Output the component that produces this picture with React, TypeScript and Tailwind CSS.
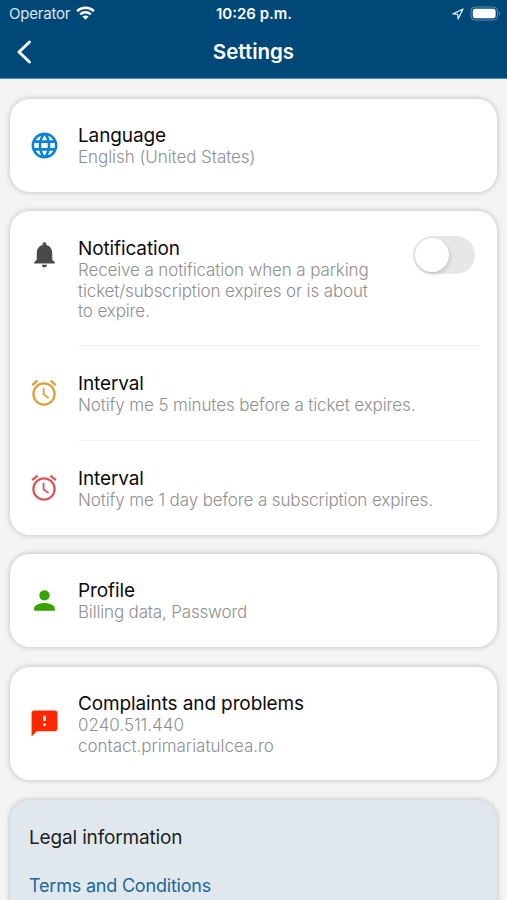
import React, { useState } from 'react';
import { MdFeedback, MdLanguage, MdNotifications, MdPerson } from 'react-icons/md';

interface RowProps {
  icon: React.ReactNode;
  title: string;
  children: React.ReactNode;
  className?: string;
  bodyClass?: string;
  alignTop?: boolean;
}

const Card: React.FC<{ className: string; children: React.ReactNode }> = ({ className, children }) => (
  <section className={`shrink-0 rounded-[20px] shadow-[0_0_5px_1px_rgba(0,0,0,0.18)] ${className}`}>{children}</section>
);

const Row: React.FC<RowProps> = ({ icon, title, children, className = '', bodyClass = 'tracking-[-0.12px]', alignTop }) => (
  <div className={`flex pl-[18px] ${alignTop ? 'items-start' : 'items-center'} ${className}`}>
    <div className={`mr-[18px] flex w-8 shrink-0 justify-center ${alignTop ? 'pt-[3px]' : ''}`}>{icon}</div>
    <div className="whitespace-nowrap pt-0.5">
      <h2 className="text-[19px] leading-[22px] tracking-[-0.12px] text-[#0c0c0c]">{title}</h2>
      <div className={`text-[17px] leading-[20.5px] font-light text-[#8f8f8f] ${bodyClass}`}>{children}</div>
    </div>
  </div>
);

const AlarmIcon: React.FC<{ color: string }> = ({ color }) => (
  <svg width="32" height="32" viewBox="0 0 32 32" fill="none" stroke={color}>
    <circle cx="16" cy="17" r="10.6" strokeWidth="2.3" />
    <path d="M15.6 11v6.6l5 3.4" strokeWidth="1.8" />
    <path d="M4.2 8.2 9.6 3.6M27.8 8.2l-5.4-4.6" strokeWidth="2.4" />
  </svg>
);

const Divider = () => <div className="ml-[68px] mr-[17px] h-px bg-[#f3f3f3]" />;

const StatusBar = () => (
  <div className="grid h-[27px] grid-cols-3 items-center pl-[9px] pr-[6px] text-[15px] leading-none">
    <div className="flex items-center gap-[6px]">
      <span className="tracking-[-0.2px] text-[#dce7ef]">Operator</span>
      <svg className="-mt-0.5" width="19" height="14" viewBox="0 0 19 14" fill="none" stroke="white" strokeWidth="2.4">
        <path d="M1.1 5.1C5.7.6 13.3.6 17.9 5.1" />
        <path d="M4.2 8.3c2.9-2.8 7.7-2.8 10.6 0" />
        <path d="M9.5 13.7 6.4 10.6c1.7-1.6 4.5-1.6 6.2 0Z" fill="white" stroke="none" />
      </svg>
    </div>
    <span className="pr-0.5 text-center font-semibold">10:26 p.m.</span>
    <div className="flex items-center justify-end gap-[6px]">
      <svg width="12" height="12" viewBox="0 0 12 12" fill="none" stroke="#dce7ef" strokeWidth="1.3" strokeLinejoin="round">
        <path d="M11 1 1 5.9l4.7.4.4 4.7L11 1Z" />
      </svg>
      <svg width="31" height="15" viewBox="0 0 31 15">
        <rect x="1" y="1" width="26.5" height="13" rx="4" fill="none" stroke="#5d8bab" strokeWidth="1" />
        <rect x="2.8" y="2.8" width="22.8" height="9.4" rx="2.2" fill="white" />
        <path d="M29 5.5c1.5.7 1.5 3.3 0 4Z" fill="#5d8bab" />
      </svg>
    </div>
  </div>
);

export default function App() {
  const [enabled, setEnabled] = useState(false);

  return (
    <div className="flex h-[900px] w-full flex-col overflow-hidden bg-[#f4f4f4] font-['Inter',sans-serif]">
      <header className="h-[79px] shrink-0 border-b border-[#4a8fb8] bg-[#004877] text-white">
        <StatusBar />
        <div className="grid h-[50px] grid-cols-3 items-center px-4">
          <button aria-label="Back">
            <svg width="18" height="26" viewBox="0 0 18 26" fill="none" stroke="white" strokeWidth="3" strokeLinecap="round" strokeLinejoin="round">
              <path d="M13.5 3 3 13l10.5 10" />
            </svg>
          </button>
          <h1 className="pt-px text-center text-[20.5px] font-semibold">Settings</h1>
        </div>
      </header>

      <main className="flex flex-col gap-[19px] px-[10px] pt-5">
        <Card className="bg-white">
          <Row icon={<MdLanguage size={31} color="#0c84d6" />} title="Language" bodyClass="tracking-[-0.06px]" className="h-[93px]">
            English (United States)
          </Row>
        </Card>

        <Card className="bg-white">
          <div className="flex h-[134px] justify-between pt-[25px]">
            <Row icon={<MdNotifications size={31} color="#4a4a4a" />} title="Notification" bodyClass="tracking-[-0.13px]" alignTop>
              Receive a notification when a parking<br />
              ticket/subscription expires or is about<br />
              to expire.
            </Row>
            <button
              role="switch"
              aria-checked={enabled}
              onClick={() => setEnabled(!enabled)}
              className={`mr-[22px] flex h-[38px] w-[62px] items-center rounded-full p-0.5 ${enabled ? 'justify-end bg-green-500' : 'bg-[#e7e7e9]'}`}
            >
              <span className="size-[34px] rounded-full bg-white shadow-[1px_2px_4px_rgba(0,0,0,0.15)]" />
            </button>
          </div>
          <Divider />
          <Row icon={<AlarmIcon color="#dda13a" />} title="Interval" className="h-[94px]">
            Notify me 5 minutes before a ticket expires.
          </Row>
          <Divider />
          <Row icon={<AlarmIcon color="#d65a5a" />} title="Interval" className="h-[94px]">
            Notify me 1 day before a subscription expires.
          </Row>
        </Card>

        <Card className="bg-white">
          <Row icon={<MdPerson size={31} color="#35a300" />} title="Profile" bodyClass="tracking-[-0.17px]" className="h-[93px]">
            Billing data, Password
          </Row>
        </Card>

        <Card className="mt-px bg-white">
          <Row icon={<MdFeedback size={31} color="#ff2600" />} title="Complaints and problems" className="h-[113px]" bodyClass="tracking-[-0.02px]">
            0240.511.440<br />
            contact.primariatulcea.ro
          </Row>
        </Card>

        <Card className="mt-px h-[140px] bg-[#e0e8ed] px-[19px] pt-[27px]">
          <h2 className="text-[19px] leading-[22px] tracking-[-0.16px] text-[#1b1f22]">Legal information</h2>
          <a className="mt-[26px] block text-[18px] leading-[22px] tracking-[-0.2px] text-[#1d6799]">Terms and Conditions</a>
        </Card>
      </main>
    </div>
  );
}
